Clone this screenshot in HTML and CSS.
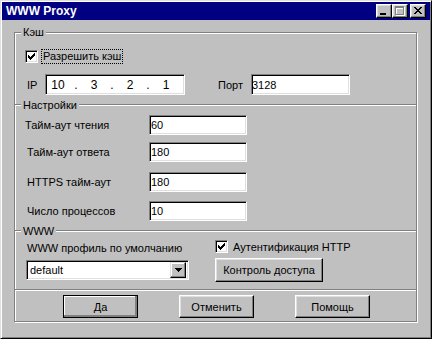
FILE: index.html
```html
<!DOCTYPE html>
<html lang="ru">
<head>
  <meta charset="UTF-8">
  <meta name="viewport" content="width=device-width, initial-scale=1.0">
  <title>WWW Proxy</title>
  <link rel="stylesheet" href="styles.css">
</head>
<body>
  <div class="window">
    <div class="titlebar">
      <span class="title">WWW Proxy</span>
      <div class="title-buttons">
        <span class="tbtn"><svg width="14" height="12" shape-rendering="crispEdges"><rect x="3" y="8" width="6" height="2" fill="#000"/></svg></span>
        <span class="tbtn"><svg width="14" height="12" shape-rendering="crispEdges">
          <path d="M3 2h9v2h-9z M3 2h1v9h-1z M11 2h1v9h-1z M3 10h9v1h-9z" fill="#fff"/>
          <path d="M2 1h9v2h-9z M2 1h1v9h-1z M10 1h1v9h-1z M2 9h9v1h-9z" fill="#808080"/>
        </svg></span>
        <span class="tbtn close"><svg width="14" height="12" shape-rendering="crispEdges">
          <path d="M3 2h2v1h-2z M9 2h2v1h-2z M4 3h2v1h-2z M8 3h2v1h-2z M5 4h4v1h-4z M6 5h2v1h-2z M5 6h4v1h-4z M4 7h2v1h-2z M8 7h2v1h-2z M3 8h2v1h-2z M9 8h2v1h-2z" fill="#000"/>
        </svg></span>
      </div>
    </div>

    <fieldset class="frame">
      <legend>Кэш</legend>
      <div class="cache-check">
        <span class="check"><svg width="7" height="7" shape-rendering="crispEdges"><path d="M6 0h1v1h-1z M5 1h2v1h-2z M0 2h1v1h-1z M4 2h3v1h-3z M0 3h2v1h-2z M3 3h3v1h-3z M0 4h5v1h-5z M1 5h3v1h-3z M2 6h1v1h-1z" fill="#000"/></svg></span>
        <span class="focus">Разрешить кэш</span>
      </div>
      <div class="ip-row">
        <span class="ip-label">IP</span>
        <div class="field ip-field">
          <span class="octet">10</span><span class="dot">.</span>
          <span class="octet">3</span><span class="dot">.</span>
          <span class="octet">2</span><span class="dot">.</span>
          <span class="octet">1</span>
        </div>
        <span class="port-label">Порт</span>
        <div class="field port-field">3128</div>
      </div>

      <div class="section-head"><span class="stub"></span><span class="head-text">Настройки</span><span class="line"></span></div>
      <div class="settings">
        <div class="setting first"><span class="setting-label">Тайм-аут чтения</span><div class="field num">60</div></div>
        <div class="setting second"><span class="setting-label">Тайм-аут ответа</span><div class="field num">180</div></div>
        <div class="setting third"><span class="setting-label">HTTPS тайм-аут</span><div class="field num">180</div></div>
        <div class="setting fourth"><span class="setting-label">Число процессов</span><div class="field num">10</div></div>
      </div>

      <div class="section-head www-head"><span class="stub"></span><span class="head-text">WWW</span><span class="line"></span></div>
      <div class="www">
        <div class="www-left">
          <div class="www-label">WWW профиль по умолчанию</div>
          <div class="field select">
            <span class="select-value">default</span>
            <span class="drop"><svg width="7" height="4" shape-rendering="crispEdges"><path d="M0 0h7v1h-7z M1 1h5v1h-5z M2 2h3v1h-3z M3 3h1v1h-1z" fill="#000"/></svg></span>
          </div>
        </div>
        <div class="www-right">
          <div class="check-row">
            <span class="check"><svg width="7" height="7" shape-rendering="crispEdges"><path d="M6 0h1v1h-1z M5 1h2v1h-2z M0 2h1v1h-1z M4 2h3v1h-3z M0 3h2v1h-2z M3 3h3v1h-3z M0 4h5v1h-5z M1 5h3v1h-3z M2 6h1v1h-1z" fill="#000"/></svg></span>
            <span class="check-text">Аутентификация HTTP</span>
          </div>
          <button class="btn access">Контроль доступа</button>
        </div>
      </div>

      <div class="divider"></div>
      <div class="buttons">
        <button class="btn default">Да</button>
        <button class="btn">Отменить</button>
        <button class="btn">Помощь</button>
      </div>
    </fieldset>
  </div>
</body>
</html>
```

FILE: styles.css
```css
body {
    margin: 0;
    font-family: "Liberation Sans", Arial, sans-serif;
    font-size: 11px;
    color: #000;
    background: #c0c0c0;
}
.window {
    width: 432px;
    height: 339px;
    box-sizing: border-box;
    background: #c0c0c0;
    border: 1px solid;
    border-color: #dfdfdf #000 #000 #dfdfdf;
    box-shadow: inset 1px 1px 0 #fff, inset -1px -1px 0 #808080;
    padding: 1px;
}
.titlebar {
    height: 18px;
    background: #000080;
    display: flex;
    align-items: center;
    justify-content: space-between;
    padding: 0 4px;
}
.title {
    color: #fff;
    font-weight: bold;
    font-size: 12px;
}
.title-buttons {
    display: flex;
}
.tbtn {
    width: 16px;
    height: 14px;
    box-sizing: border-box;
    background: #c0c0c0;
    border: 1px solid;
    border-color: #fff #000 #000 #fff;
    box-shadow: inset -1px -1px 0 #808080, inset 1px 1px 0 #dfdfdf;
}
.tbtn svg {
    display: block;
}
.tbtn.close {
    margin-left: 2px;
}

.frame {
    margin: 6px 0 0 12px;
    width: 403px;
    box-sizing: border-box;
    min-width: 0;
    padding: 0 0 3px 0;
    border: 1px solid #808080;
    box-shadow: 1px 1px 0 #fff, inset 1px 1px 0 #fff;
}
.frame legend {
    margin-left: 6px;
    padding: 0 2px;
    line-height: 13px;
    background: #c0c0c0;
}

.field {
    box-sizing: border-box;
    background: #fff;
    border: 1px solid;
    border-color: #808080 #fff #fff #808080;
    box-shadow: inset 1px 1px 0 #000, inset -1px -1px 0 #dfdfdf;
    padding-left: 1px;
    display: flex;
    align-items: center;
}
.check {
    width: 13px;
    height: 13px;
    box-sizing: border-box;
    background: #fff;
    border: 1px solid;
    border-color: #808080 #fff #fff #808080;
    box-shadow: inset 1px 1px 0 #000, inset -1px -1px 0 #dfdfdf;
    display: flex;
    align-items: center;
    justify-content: center;
    flex: none;
}
.check svg {
    display: block;
}

.cache-check {
    margin-top: 10px;
    height: 15px;
    display: flex;
    align-items: center;
    padding-left: 10px;
}
.focus {
    margin-left: 3px;
    border: 1px dotted #000;
    padding: 0 1px;
    line-height: 13px;
}

.ip-row {
    margin-top: 10px;
    height: 21px;
    display: flex;
    align-items: center;
    padding-left: 12px;
}
.ip-label {
    width: 18px;
}
.ip-field {
    width: 140px;
    height: 21px;
    font-size: 12px;
}
.octet {
    width: 22px;
    text-align: center;
}
.dot {
    width: 14px;
    text-align: center;
}
.port-label {
    margin-left: 33px;
    width: 33px;
}
.port-field {
    width: 99px;
    height: 21px;
    padding-left: 0;
}

.section-head {
    margin-top: 4px;
    height: 12px;
    display: flex;
    align-items: center;
}
.stub {
    width: 6px;
    height: 0;
    border-top: 1px solid #808080;
    border-bottom: 1px solid #fff;
}
.line {
    flex: 1;
    height: 0;
    border-top: 1px solid #808080;
    border-bottom: 1px solid #fff;
}
.head-text {
    padding: 0 2px;
    line-height: 12px;
}

.settings {
    margin-top: 4px;
}
.setting {
    height: 20px;
    display: flex;
    align-items: center;
    padding-left: 12px;
}
.setting.first {
    padding-left: 10px;
}
.setting.second {
    margin-top: 7px;
}
.setting.third {
    margin-top: 10px;
}
.setting.fourth {
    margin-top: 9px;
}
.setting-label {
    width: 122px;
}
.setting.first .setting-label {
    width: 124px;
}
.num {
    width: 98px;
    height: 20px;
    padding-left: 1px;
}

.www-head {
    margin-top: 4px;
}
.www {
    display: flex;
    padding-left: 11px;
}
.www-label {
    margin-top: 5px;
    line-height: 13px;
    padding-left: 1px;
}
.select {
    margin-top: 5px;
    width: 163px;
    height: 20px;
    padding: 0 2px 0 3px;
}
.select-value {
    flex: 1;
}
.drop {
    width: 16px;
    height: 16px;
    box-sizing: border-box;
    background: #c0c0c0;
    border: 1px solid;
    border-color: #dfdfdf #000 #000 #dfdfdf;
    box-shadow: inset -1px -1px 0 #808080, inset 1px 1px 0 #fff;
    display: flex;
    align-items: center;
    justify-content: center;
}
.drop svg {
    display: block;
}
.www-right {
    margin-left: 26px;
}
.check-row {
    margin-top: 3px;
    height: 13px;
    display: flex;
    align-items: center;
}
.check-text {
    margin-left: 5px;
}

.btn {
    font-family: "Liberation Sans", Arial, sans-serif;
    font-size: 11px;
    color: #000;
    background: #c0c0c0;
    box-sizing: border-box;
    border: 1px solid;
    border-color: #fff #000 #000 #fff;
    box-shadow: inset -1px -1px 0 #808080, inset 1px 1px 0 #dfdfdf;
    padding: 0;
    width: 75px;
    height: 23px;
    display: block;
}
.access {
    margin-top: 5px;
    width: 108px;
    height: 24px;
}
.btn.default {
    border-color: #000;
    box-shadow: inset -2px -2px 0 #808080, inset 1px 1px 0 #fff;
}

.divider {
    margin-top: 7px;
    height: 0;
    border-top: 1px solid #808080;
    border-bottom: 1px solid #fff;
}
.buttons {
    margin-top: 4px;
    display: flex;
    gap: 41px;
    padding-left: 48px;
}
```
